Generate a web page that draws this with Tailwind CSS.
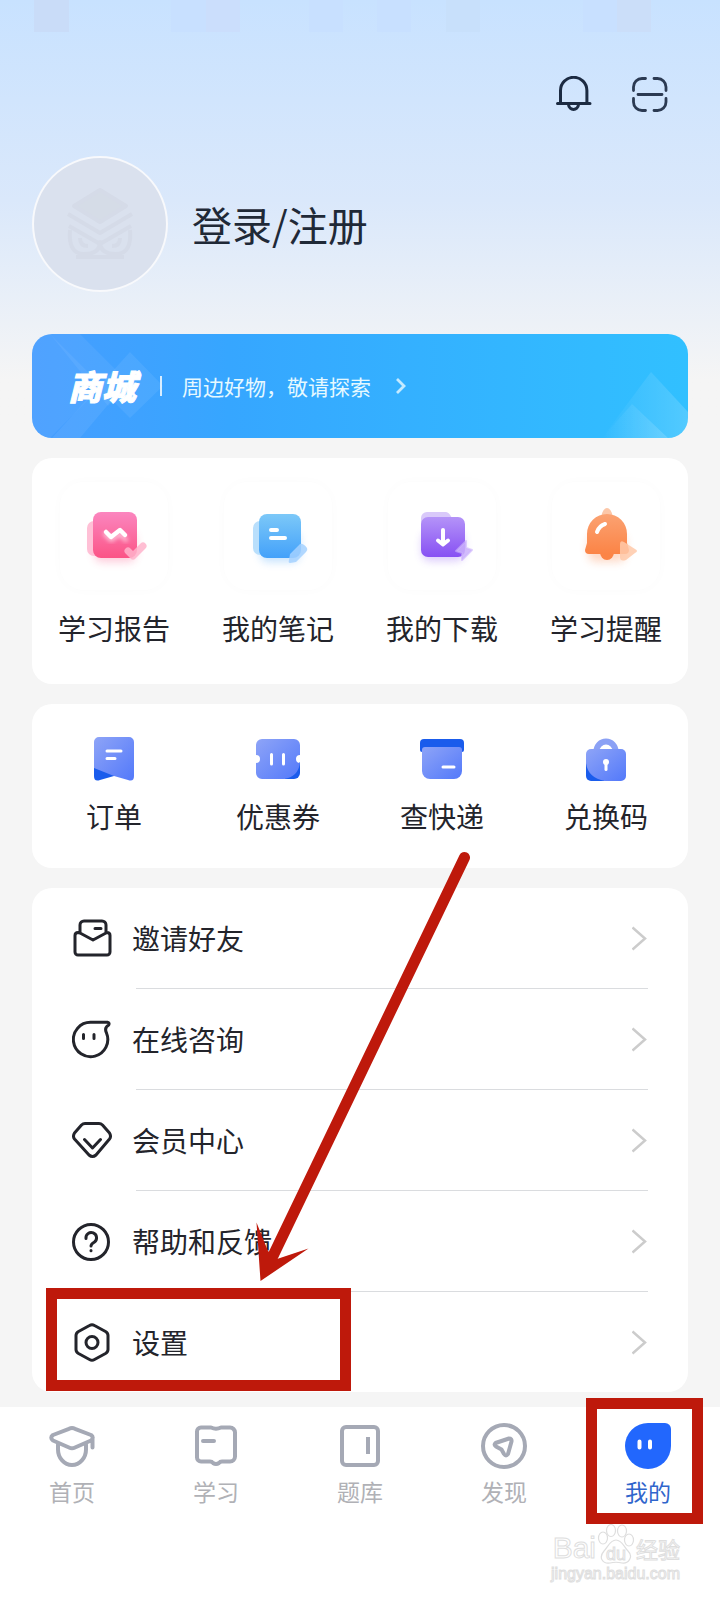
<!DOCTYPE html>
<html lang="zh-CN">
<head>
    <meta charset="UTF-8">
    <meta name="viewport" content="width=device-width, initial-scale=1.0">
    <title>我的</title>
    <script src="https://cdn.jsdelivr.net/npm/@tailwindcss/browser@4"></script>
</head>
<body class="min-h-screen flex flex-col bg-[#f5f5f5] text-[#23242b] font-['Noto_Sans_CJK_SC',sans-serif]">

    <div class="bg-linear-to-b from-[#c8e2ff] via-[#dae8fb] via-[200px] to-[#f5f5f5] to-[380px]">
        <!-- Status bar -->
        <div class="h-8 grid grid-cols-21">
            <span class="col-start-2 bg-[#c9dcf8]"></span>
            <span class="col-start-6 bg-[#c8e0ff]"></span>
            <span class="col-start-7 bg-[#cbdefc]"></span>
            <span class="col-start-10 bg-[#c8e0ff]"></span>
            <span class="col-start-12 bg-[#c8e0ff]"></span>
            <span class="col-start-14 bg-[#c8e0fb]"></span>
            <span class="col-start-18 bg-[#c8e0ff]"></span>
            <span class="col-start-19 bg-[#cbdef9]"></span>
        </div>

        <header class="px-8 pt-11">
            <div class="flex justify-end gap-10 pr-5">
                <button type="button" aria-label="消息">
                    <svg class="block size-9" viewBox="0 0 36 36" fill="none" stroke="#1c2b42" stroke-width="3" stroke-linecap="round">
                        <path d="M4.500 27V14.500a13.200 13.200 0 0 1 26.400 0V27M1.500 27.500h32.500M12.500 28.500c.6 6.500 9.400 6.500 10 0"/>
                    </svg>
                </button>
                <button type="button" aria-label="扫一扫">
                    <svg class="block size-9" viewBox="0 0 36 36" fill="none" stroke="#2b3a52" stroke-width="2.800" stroke-linecap="round">
                        <path d="M13.500 2.500h-3.500a8.500 8.500 0 0 0-8.500 8.500v3.500M22 2.500h3.500a8.500 8.500 0 0 1 8.500 8.500v3.500M13.500 34.500h-3.500a8.500 8.500 0 0 1-8.500-8.500v-3.500M22 34.500h3.500a8.500 8.500 0 0 0 8.500-8.500v-3.500M6 18.500h24"/>
                    </svg>
                </button>
            </div>

            <a href="#" class="mt-11 flex items-center gap-6">
                <span class="size-[136px] shrink-0 rounded-full border-2 border-white/80 bg-[#dae1ee] flex items-center justify-center">
                    <svg class="size-20" viewBox="0 0 80 80" fill="none" stroke="#d5dbe8" stroke-width="4" stroke-linejoin="round">
                        <path d="M40 6 66 22 40 38 14 22z" fill="#d5dce7"/>
                        <path d="M8 30 40 49 72 30M9 42 40 60 71 42"/>
                        <path d="M10 46q-2 24 14 24t16-12q0 12 16 12t14-24"/>
                        <path d="M20 54q0 8 8 8M60 54q0 8-8 8M16 73h48"/>
                    </svg>
                </span>
                <span class="text-[40px] leading-[56px] text-[#1f2937]">登录/注册</span>
            </a>
        </header>

        <div class="px-8 pt-[42px]">
            <a href="#" class="relative flex items-center h-[104px] pl-9 rounded-[20px] overflow-hidden bg-linear-to-r from-[#469dff] via-[#36a6ff] via-30% to-[#31c0ff] text-white">
                <svg class="absolute left-0 top-0 h-full" width="140" height="104" viewBox="0 0 140 104" fill="#ffffff">
                    <path opacity=".06" d="M18 0 70 52 18 104H0V0z"/>
                    <path opacity=".07" d="M20 104 98 18 131 52 98 84 80 66 48 104z"/>
                    <path opacity=".06" d="M18 0H48L98 50 76 72z"/>
                </svg>
                <svg class="absolute right-0 bottom-0" width="86" height="66" viewBox="0 0 86 66">
                    <defs>
                        <linearGradient id="fade" x2="1" y2="0"><stop stop-color="#fff" stop-opacity="0"/><stop offset="1" stop-color="#fff" stop-opacity=".16"/></linearGradient>
                    </defs>
                    <path d="M0 66 49 0 86 40V66z" fill="url(#fade)"/>
                    <path d="M0 66 30 32 66 66z" fill="url(#fade)"/>
                </svg>
                <span class="relative text-[34px] leading-10 font-black italic [-webkit-text-stroke:1px_white]">商城</span>
                <span class="ml-6 h-5 w-0.5 bg-white/80"></span>
                <span class="ml-5 text-[21px] leading-8 text-[#e6f9ff]">周边好物，敬请探索</span>
                <svg class="ml-6 h-5 w-3" viewBox="0 0 12 20" fill="none" stroke="#c4eaff" stroke-width="2.800"><path d="M2 3l7 7-7 7"/></svg>
            </a>
        </div>
    </div>

    <main class="px-8 pt-5 pb-[15px] space-y-5">
        <!-- Study tools -->
        <section class="grid grid-cols-4 rounded-[20px] bg-white pt-6 pb-[38px]">
            <a href="#" class="flex flex-col items-center gap-5">
                <span class="size-[108px] rounded-3xl shadow-[0_0_12px_rgba(0,0,0,0.02)] flex items-center justify-center">
                    <svg class="size-[72px] overflow-visible" viewBox="0 0 72 72" fill="none" stroke-linecap="round" stroke-linejoin="round">
                        <defs>
                            <linearGradient id="pink" x2="0" y2="1"><stop stop-color="#fb86bf"/><stop offset="1" stop-color="#fb5486"/></linearGradient>
                            <filter id="soft" x="-30%" y="-30%" width="160%" height="160%"><feGaussianBlur stdDeviation="4"/></filter>
                            <filter id="glow" x="-30%" y="-60%" width="160%" height="220%"><feGaussianBlur stdDeviation="2"/></filter>
                        </defs>
                        <rect x="16" y="32" width="42" height="30" rx="8" fill="#fb5486" opacity=".3" filter="url(#soft)"/>
                        <rect x="9" y="21" width="20" height="35" rx="7" fill="#ffc0d6"/>
                        <rect x="15" y="12" width="44" height="46" rx="8" fill="url(#pink)"/>
                        <path d="M27 34l6 6 9-6 6 6" stroke="#fff" stroke-opacity=".6" stroke-width="4" filter="url(#glow)"/>
                        <path d="M28 32l5 5 9-7 5 5" stroke="#fff" stroke-width="4.500"/>
                        <path d="M50 51l5 5 10-10" stroke="#ffb3cb" stroke-opacity=".85" stroke-width="7"/>
                    </svg>
                </span>
                <span class="text-[28px] leading-9">学习报告</span>
            </a>
            <a href="#" class="flex flex-col items-center gap-5">
                <span class="size-[108px] rounded-3xl shadow-[0_0_12px_rgba(0,0,0,0.02)] flex items-center justify-center">
                    <svg class="size-[72px] overflow-visible" viewBox="0 0 72 72" fill="none">
                        <defs>
                            <linearGradient id="sky" x2="0" y2="1"><stop stop-color="#7cc8f8"/><stop offset="1" stop-color="#43a1fa"/></linearGradient>
                        </defs>
                        <rect x="18" y="32" width="40" height="30" rx="8" fill="#43a1fa" opacity=".3" filter="url(#soft)"/>
                        <rect x="11" y="21" width="20" height="34" rx="7" fill="#b9dffc"/>
                        <rect x="17" y="14" width="42" height="44" rx="8" fill="url(#sky)"/>
                        <path d="M29 30h6M29 38h14" stroke="#fff" stroke-width="4" stroke-linecap="round"/>
                        <path d="M58 44q3-1 7 4 1 2-1 4L54 62l-6 1q-2 0-1-3l1-6z" fill="#a5d1ff" fill-opacity=".85"/>
                    </svg>
                </span>
                <span class="text-[28px] leading-9">我的笔记</span>
            </a>
            <a href="#" class="flex flex-col items-center gap-5">
                <span class="size-[108px] rounded-3xl shadow-[0_0_12px_rgba(0,0,0,0.02)] flex items-center justify-center">
                    <svg class="size-[72px] overflow-visible" viewBox="0 0 72 72" fill="none" stroke-linecap="round" stroke-linejoin="round">
                        <defs>
                            <linearGradient id="violet" x2="0" y2="1"><stop stop-color="#b493f8"/><stop offset="1" stop-color="#8750f3"/></linearGradient>
                        </defs>
                        <rect x="16" y="32" width="42" height="29" rx="8" fill="#8750f3" opacity=".3" filter="url(#soft)"/>
                        <path d="M15 30V18a6 6 0 0 1 6-6h19q3 0 6 6v10z" fill="#d9c9fa"/>
                        <rect x="15" y="17" width="44" height="40" rx="7" fill="url(#violet)"/>
                        <path d="M37 30v14M32 40.500l5 4 5-4" stroke="#fff" stroke-width="4"/>
                        <path d="M60 41v7l6 2-10 10v-7l-6-2z" fill="#cbb2fc" fill-opacity=".85" stroke="#cbb2fc" stroke-opacity=".6" stroke-width="2"/>
                    </svg>
                </span>
                <span class="text-[28px] leading-9">我的下载</span>
            </a>
            <a href="#" class="flex flex-col items-center gap-5">
                <span class="size-[108px] rounded-3xl shadow-[0_0_12px_rgba(0,0,0,0.02)] flex items-center justify-center">
                    <svg class="size-[72px] overflow-visible" viewBox="0 0 72 72" fill="none">
                        <defs>
                            <linearGradient id="orange" x2="0" y2="1"><stop stop-color="#fba272"/><stop offset="1" stop-color="#fb8446"/></linearGradient>
                        </defs>
                        <rect x="18" y="34" width="38" height="28" rx="8" fill="#fb8446" opacity=".3" filter="url(#soft)"/>
                        <path d="M31 17q2-9 6-9t6 9z" fill="#fcc7a8"/>
                        <path d="M30 52h14a7 8 0 0 1-14 0z" fill="#fb8446"/>
                        <path d="M17 34a20 20 0 0 1 40 0v9l2 7q0 4-4 4H19q-4 0-4-4l2-7z" fill="url(#orange)"/>
                        <path d="M27 32q2-6 8-8" stroke="#fff" stroke-width="4" stroke-linecap="round"/>
                        <path d="M50 44q0-4 4-2l11 7q4 2 0 4l-9 7q-6 2-6-3z" fill="#ffc9a9" fill-opacity=".85"/>
                    </svg>
                </span>
                <span class="text-[28px] leading-9">学习提醒</span>
            </a>
        </section>

        <!-- Orders -->
        <section class="grid grid-cols-4 rounded-[20px] bg-white pt-8 pb-[34px]">
            <a href="#" class="flex flex-col items-center gap-[14px]">
                <svg class="size-12" viewBox="0 0 48 48">
                    <defs>
                        <linearGradient id="blue" x2="1" y2="1"><stop stop-color="#8ea4f7"/><stop offset="1" stop-color="#5379fa"/></linearGradient>
                    </defs>
                    <path d="M4 28v12q0 6 6 4l14-4V28z" fill="#1a5cec"/>
                    <path d="M9 1h30a5 5 0 0 1 5 5v34q0 6-6 4L24 40 4 32V6a5 5 0 0 1 5-5z" fill="url(#blue)"/>
                    <path d="M17 15h14M17 22.500h8" stroke="#fff" stroke-width="3" stroke-linecap="round"/>
                </svg>
                <span class="text-[28px] leading-9">订单</span>
            </a>
            <a href="#" class="flex flex-col items-center gap-[14px]">
                <svg class="size-12" viewBox="0 0 48 48">
                    <path d="M46 26v11a6 6 0 0 1-6 6H30z" fill="#1a5cec"/>
                    <path d="M8 3h32a6 6 0 0 1 6 6v10a4 4 0 0 0 0 8q-2 14-16 16H8a6 6 0 0 1-6-6V27a4 4 0 0 0 0-8V9a6 6 0 0 1 6-6z" fill="url(#blue)"/>
                    <path d="M17.500 18.500v9.500M29.500 18.500v9.500" stroke="#fff" stroke-width="3" stroke-linecap="round"/>
                </svg>
                <span class="text-[28px] leading-9">优惠券</span>
            </a>
            <a href="#" class="flex flex-col items-center gap-[14px]">
                <svg class="size-12" viewBox="0 0 48 48">
                    <path d="M6 3h36a4 4 0 0 1 4 4v7q0 2-2 2H4q-2 0-2-2V7a4 4 0 0 1 4-4z" fill="#1a5cec"/>
                    <path d="M7 11h34a3 3 0 0 1 3 3v21a8 8 0 0 1-8 8H12a8 8 0 0 1-8-8V14a3 3 0 0 1 3-3z" fill="url(#blue)"/>
                    <path d="M25 31h11" stroke="#fff" stroke-width="3" stroke-linecap="round"/>
                </svg>
                <span class="text-[28px] leading-9">查快递</span>
            </a>
            <a href="#" class="flex flex-col items-center gap-[14px]">
                <svg class="size-12" viewBox="0 0 48 48">
                    <path d="M14.500 15a9.500 9.500 0 0 1 19 0" fill="none" stroke="#8ba1f5" stroke-width="6"/>
                    <path d="M4 26v14a5 5 0 0 0 5 5h14z" fill="#1a5cec"/>
                    <path d="M9 13h30a5 5 0 0 1 5 5v22a5 5 0 0 1-5 5H23Q6 42 4 27v-9a5 5 0 0 1 5-5z" fill="url(#blue)"/>
                    <circle cx="24" cy="26" r="3" fill="#fff"/>
                    <path d="M24 26v7.500" stroke="#fff" stroke-width="3" stroke-linecap="round"/>
                </svg>
                <span class="text-[28px] leading-9">兑换码</span>
            </a>
        </section>

        <!-- Menu -->
        <section class="relative rounded-[20px] bg-white px-10">
            <a href="#" class="flex items-center gap-5 h-[100px]">
                <svg class="size-10" viewBox="0 0 40 40" fill="none" stroke="#23242b" stroke-width="3" stroke-linecap="round" stroke-linejoin="round">
                    <path d="M8 15V7a4 4 0 0 1 4-4h18a4 4 0 0 1 4 4v8M8 15l-2-.5q-3 0-3 3V34a3 3 0 0 0 3 3h29a3 3 0 0 0 3-3V17.500q0-3-3-3L34 15l-13 7zM23 10.500h6"/>
                </svg>
                <span class="text-[28px] leading-9">邀请好友</span>
                <svg class="ml-auto h-7 w-4" viewBox="0 0 16 28" fill="none" stroke="#ccc" stroke-width="2.500"><path d="M.5 3.500 13 14.500.5 25.500"/></svg>
            </a>
            <hr class="ml-16 border-[#dadcdf]">
            <a href="#" class="flex items-center gap-5 h-[100px]">
                <svg class="size-10" viewBox="0 0 40 40" fill="none" stroke="#23242b" stroke-width="3" stroke-linecap="round" stroke-linejoin="round">
                    <path d="M34.500 14A17.200 17.200 0 1 1 18.500 3.300H35.500q2.500.5 1 3-4.500 2.500-2 7.700z"/>
                    <path d="M11.500 15.500v4M22 15.500v4"/>
                </svg>
                <span class="text-[28px] leading-9">在线咨询</span>
                <svg class="ml-auto h-7 w-4" viewBox="0 0 16 28" fill="none" stroke="#ccc" stroke-width="2.500"><path d="M.5 3.500 13 14.500.5 25.500"/></svg>
            </a>
            <hr class="ml-16 border-[#dadcdf]">
            <a href="#" class="flex items-center gap-5 h-[100px]">
                <svg class="size-10" viewBox="0 0 40 40" fill="none" stroke="#23242b" stroke-width="3" stroke-linecap="round" stroke-linejoin="round">
                    <path d="M13 3.500h14q2 0 3.500 1.500l7 8q2 3.500 0 6L24 35q-3.500 3-7 0L2.500 19q-2-2.500 0-6l7-8Q11 3.500 13 3.500zM12.500 19.500l8 8.500 8-8.500"/>
                </svg>
                <span class="text-[28px] leading-9">会员中心</span>
                <svg class="ml-auto h-7 w-4" viewBox="0 0 16 28" fill="none" stroke="#ccc" stroke-width="2.500"><path d="M.5 3.500 13 14.500.5 25.500"/></svg>
            </a>
            <hr class="ml-16 border-[#dadcdf]">
            <a href="#" class="flex items-center gap-5 h-[100px]">
                <svg class="size-10" viewBox="0 0 40 40" fill="none" stroke="#23242b" stroke-width="3" stroke-linecap="round" stroke-linejoin="round">
                    <circle cx="19" cy="21" r="17.500"/>
                    <path d="M14 17.500a5.300 5.300 0 1 1 8.500 3.500q-3.500 2-3.500 4M19 29.500v.2"/>
                </svg>
                <span class="text-[28px] leading-9">帮助和反馈</span>
                <svg class="ml-auto h-7 w-4" viewBox="0 0 16 28" fill="none" stroke="#ccc" stroke-width="2.500"><path d="M.5 3.500 13 14.500.5 25.500"/></svg>
            </a>
            <hr class="ml-16 border-[#dadcdf]">
            <a href="#" class="flex items-center gap-5 h-[100px]">
                <svg class="size-10" viewBox="0 0 40 40" fill="none" stroke="#23242b" stroke-width="3" stroke-linejoin="round">
                    <path d="M17.500 3.500q2.500-1.500 5 0l11 6q2.500 1.500 2.500 4v14q0 2.500-2.500 4l-11 6q-2.500 1.500-5 0l-11-6q-2.500-1.500-2.500-4v-14q0-2.500 2.500-4z"/>
                    <circle cx="20" cy="20.500" r="6"/>
                </svg>
                <span class="text-[28px] leading-9">设置</span>
                <svg class="ml-auto h-7 w-4" viewBox="0 0 16 28" fill="none" stroke="#ccc" stroke-width="2.500"><path d="M.5 3.500 13 14.500.5 25.500"/></svg>
            </a>

            <!-- Pointer to the settings row -->
            <span class="absolute left-[14px] bottom-px w-[305px] h-[103px] border-[11px] border-[#be190b] pointer-events-none"></span>
            <svg class="absolute left-[218px] -top-10 pointer-events-none" width="230" height="440" viewBox="250 848 230 440" fill="#be190b">
                <path d="M464.500 857.500 271 1260" stroke="#be190b" stroke-width="11" stroke-linecap="round"/>
                <path d="M260.500 1281 256.500 1222.500 268 1251 277 1259 308.500 1248.500z"/>
            </svg>
        </section>
    </main>

    <footer class="grow bg-white">
        <nav class="grid grid-cols-5 pt-[15px] text-[#b0b1b6] text-[23px] leading-[30px]">
            <a href="#" class="flex flex-col items-center gap-1.5">
                <svg class="size-12" viewBox="0 0 48 48" fill="none" stroke="#a5a9b5" stroke-width="4" stroke-linecap="round" stroke-linejoin="round">
                    <path d="M21 6.800q3-1.500 6 0L43 13q3.500 2.500 0 5.500L27 25.500q-3 1.500-6 0L5 18.500Q1.500 15.500 5 13zM10 22.500v5a14 15.500 0 0 0 28 0v-5M44.500 17v8.500"/>
                </svg>
                首页
            </a>
            <a href="#" class="flex flex-col items-center gap-1.5">
                <svg class="size-12" viewBox="0 0 48 48" fill="none" stroke="#a5a9b5" stroke-width="4" stroke-linecap="round" stroke-linejoin="round">
                    <path d="M9 5.500h10q5 2.500 10 0h9a5 5 0 0 1 5 5v24a5 5 0 0 1-5 5H30q-2 0-3 1.500-3 2-6 0-1-1.500-3-1.500H9a4 4 0 0 1-4-4V9.500a4 4 0 0 1 4-4zM11 19h11"/>
                </svg>
                学习
            </a>
            <a href="#" class="flex flex-col items-center gap-1.5">
                <svg class="size-12" viewBox="0 0 48 48" fill="none" stroke="#a5a9b5" stroke-width="4">
                    <rect x="6" y="5" width="36" height="38" rx="4"/>
                    <path d="M32 15v17"/>
                </svg>
                题库
            </a>
            <a href="#" class="flex flex-col items-center gap-1.5">
                <svg class="size-12" viewBox="0 0 48 48" fill="none" stroke="#a5a9b5" stroke-width="4" stroke-linejoin="round">
                    <circle cx="24" cy="24" r="21"/>
                    <path d="M15.500 21 29 16.500q3 0 2.500 3L28 32q-2 3-4 0l-2.500-4.500-5.500-3q-2.500-2-.5-3.500z"/>
                </svg>
                发现
            </a>
            <a href="#" class="relative flex flex-col items-center gap-1.5 text-[#3065cc]">
                <svg class="size-12" viewBox="0 0 48 48">
                    <path d="M24 1h17a6 6 0 0 1 6 6v17A23 23 0 1 1 24 1z" fill="#2267fd"/>
                    <path d="M15.500 19.500v6M26 19.500v6" stroke="#fff" stroke-width="4" stroke-linecap="round"/>
                </svg>
                我的
                <span class="absolute left-[10px] right-[17px] -top-6 h-[126px] border-[11px] border-[#be190b] pointer-events-none"></span>
            </a>
        </nav>

        <!-- Watermark -->
        <div class="flex flex-col items-end pt-[18px] pr-10 text-white [-webkit-text-stroke:1px_#dedede]">
            <div class="flex items-end h-10">
                <span class="font-['Liberation_Sans',sans-serif] text-[30px] leading-8">Bai</span>
                <span class="relative">
                    <svg class="block size-10" viewBox="0 0 40 40" fill="#fff" stroke="#dedede" stroke-width="1.200">
                        <ellipse cx="7" cy="14" rx="4.500" ry="6"/>
                        <ellipse cx="15" cy="6.500" rx="4.500" ry="6"/>
                        <ellipse cx="26" cy="7" rx="4.500" ry="6"/>
                        <ellipse cx="33" cy="16" rx="4.500" ry="6"/>
                        <path d="M20 16c6 0 8 7 12 11 6 6 0 13-6 12-4-1-8-1-12 0-7 1-12-5-6-12 4-4 6-11 12-11z"/>
                    </svg>
                    <span class="absolute inset-x-0 bottom-0 text-center font-['Liberation_Sans',sans-serif] text-[18px] leading-5">du</span>
                </span>
                <span class="text-[22px] leading-8">经验</span>
            </div>
            <span class="font-['Liberation_Sans',sans-serif] text-[16px] leading-5">jingyan.baidu.com</span>
        </div>
    </footer>

</body>
</html>
